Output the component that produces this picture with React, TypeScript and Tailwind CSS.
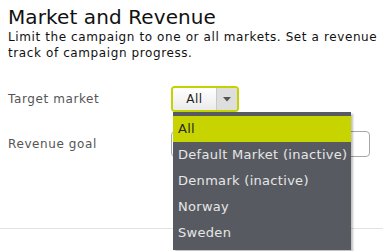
import React from "react";

export default function App() {
  const items = [
    "All",
    "Default Market (inactive)",
    "Denmark (inactive)",
    "Norway",
    "Sweden",
  ];
  return (
    <div
      className="relative w-[383px] h-[251px] overflow-hidden bg-white"
      style={{ fontFamily: '"DejaVu Sans", Verdana, sans-serif' }}
    >
      <div className="px-2 pt-[6px]">
        <h1 className="text-[20px] leading-[23px] text-[#111] font-normal tracking-[0.1px]">
          Market and Revenue
        </h1>
        <p className="text-[12px] leading-[16px] text-[#111] whitespace-nowrap tracking-[0.6px]">
          Limit the campaign to one or all markets. Set a revenue
          <br />
          track of campaign progress.
        </p>

        <div className="mt-[25px] flex items-center">
          <div className="w-[163px] text-[12px] leading-[15px] text-[#555] tracking-[0.6px]">
            Target market
          </div>
          <div className="relative">
            <div className="flex h-[26px] w-[68px] rounded-[4px] border-2 border-[#c4d300] overflow-hidden">
              <div className="flex flex-1 items-center justify-center bg-gradient-to-b from-white to-[#ebebeb] border-r border-[#c8c8c8] text-[12px] text-[#222] tracking-[0.5px]">
                All
              </div>
              <div className="flex w-[20px] items-center justify-center bg-[#dedede]">
                <svg width="8" height="5" viewBox="0 0 8 5">
                  <path d="M0 0 H8 L4 4.5 Z" fill="#555" />
                </svg>
              </div>
            </div>
            <div className="absolute left-[2px] top-[26px] z-10 w-[178px] bg-[#575b61] pt-[4px] pb-[4px] shadow-[2px_2px_2px_rgba(0,0,0,0.25)]">
              {items.map((it, i) => (
                <div
                  key={it}
                  className={
                    i === 0
                      ? "h-[26px] flex items-center pl-[5px] bg-[#c8d400] text-[#2a2a2a] text-[13px] tracking-[0.3px] whitespace-nowrap"
                      : "h-[26px] flex items-center pl-[5px] text-[#e6e6e6] text-[13px] tracking-[0.3px] whitespace-nowrap"
                  }
                >
                  {it}
                </div>
              ))}
            </div>
          </div>
        </div>

        <div className="mt-[19px] flex items-center">
          <div className="w-[163px] text-[12px] leading-[15px] text-[#555] tracking-[0.6px]">
            Revenue goal
          </div>
          <div className="h-[26px] w-[199px] rounded-[4px] border border-[#a3a8ad] bg-white" />
        </div>
      </div>

      <div className="mt-[71px] h-px w-full bg-[#e3e3e3]" />
    </div>
  );
}
